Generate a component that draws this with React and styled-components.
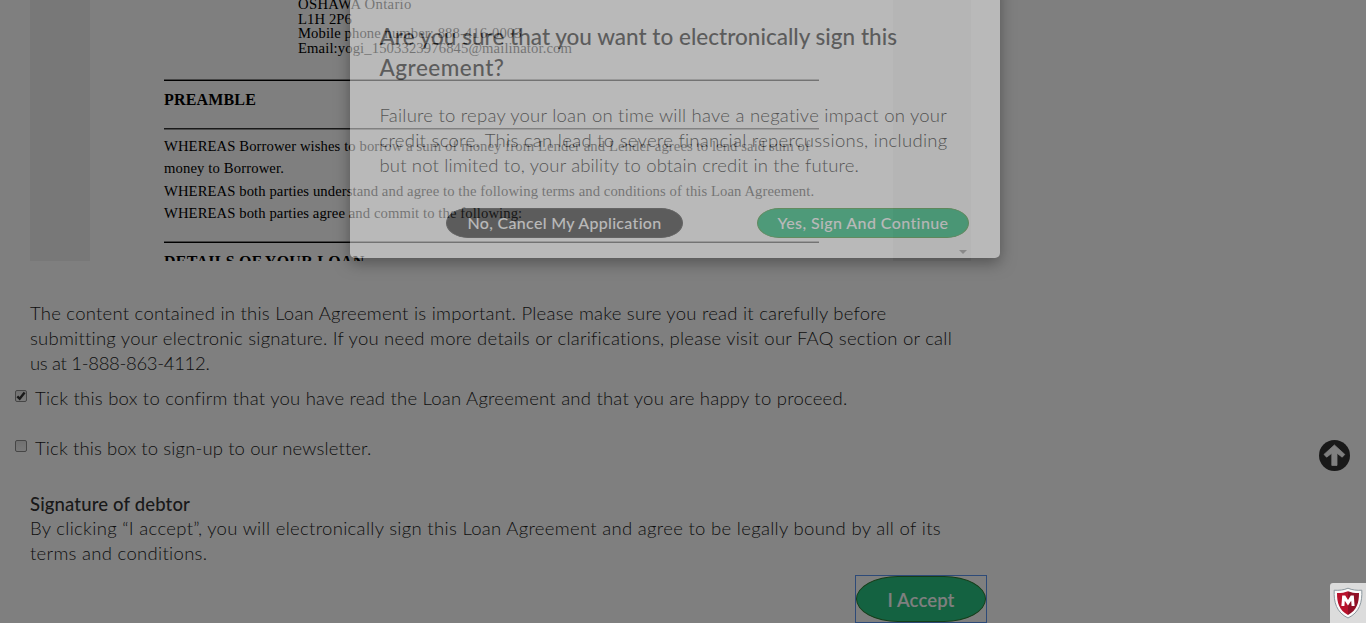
import React from "react";
import styled, { createGlobalStyle } from "styled-components";

const GlobalStyle = createGlobalStyle`
  *, *::before, *::after { box-sizing: border-box; }
  body { margin: 0; background: #fff; color: #333; font-family: Lato, "Open Sans", sans-serif; }
`;

const Page = styled.div`
  position: relative;
  width: 1366px;
  height: 623px;
  overflow: hidden;
  background: #fff;
`;

const Line = styled.span`
  display: block;
  white-space: nowrap;
  letter-spacing: ${(p) => p.$track || 0}px;
`;

/* Loan document */

const DocumentFrame = styled.section`
  display: flex;
  width: 941px;
  height: 261px;
  margin-left: 30px;
  overflow: hidden;
`;

const Gutter = styled.div`
  flex: none;
  width: ${(p) => p.$width}px;
  background: #f1f1f1;
`;

const ScrollTrack = styled.div`
  display: flex;
  flex: none;
  align-items: flex-end;
  justify-content: center;
  width: 17px;
  padding-bottom: 7px;
  background: #f1f1f1;
`;

const ScrollArrow = styled.i`
  border: 4px solid transparent;
  border-top-color: #505050;
  border-bottom: 0;
`;

const Paper = styled.article`
  flex: none;
  width: 655px;
  margin: 0 74px;
  color: #000;
  font-family: "Liberation Serif", "Times New Roman", serif;
  font-size: 14.67px;
`;

const Address = styled.address`
  height: 82px;
  margin-top: -3px;
  padding-left: 134px;
  font-style: normal;
  line-height: 14.67px;
`;

const Rule = styled.hr`
  height: 2px;
  margin: 0;
  border: 0;
  border-top: 1px solid ${(p) => p.$top};
  border-bottom: 1px solid ${(p) => p.$bottom};
`;

const DocHeading = styled.h4`
  height: 47px;
  margin: 0;
  padding-top: 9px;
  font-size: 16px;
  line-height: 20px;
`;

const Clauses = styled.div`
  height: 111px;
  padding-top: 5px;
  line-height: 22.4px;
`;

/* Consent form */

const Copy = styled.div`
  margin: ${(p) => p.$top}px 0 0 30px;
  color: #1c1c1c;
  font-size: 18.5px;
  font-weight: 300;
  line-height: 25px;
`;

const Strong = styled.strong`
  display: block;
  height: 25px;
  padding-top: 1px;
  color: #333;
  font-weight: 500;
`;

const CheckRow = styled.label`
  display: flex;
  gap: 8px;
  height: 25px;
  margin: ${(p) => p.$top}px 0 0 15px;
  color: #1c1c1c;
  font-size: 18.5px;
  font-weight: 300;
  line-height: 25px;
`;

const Box = styled.span`
  flex: none;
  width: 12px;
  height: 12px;
  margin-top: 4px;
  border: 1px solid #8c8c8c;
  border-radius: 2px;
  background: linear-gradient(#e2e2e2, #f4f4f4);

  svg { display: block; }
`;

const Actions = styled.div`
  display: flex;
  width: 987px;
  margin-top: 9px;
  justify-content: flex-end;
`;

const FocusRing = styled.div`
  width: 132px;
  height: 48px;
  border: 1px solid #5a94f0;
`;

const AcceptButton = styled.button`
  width: 130px;
  height: 46px;
  padding: 1px 0 0;
  border: 1px solid #2c7a32;
  border-radius: 42px / 23px;
  background: #28c582;
  color: #fff;
  font: 600 18.5px/24px Lato, sans-serif;
`;

/* Floating elements */

const ToTop = styled.button`
  position: absolute;
  top: 440px;
  left: 1319px;
  padding: 0;
  border: 0;
  background: none;

  svg { display: block; }
`;

const Backdrop = styled.div`
  position: absolute;
  inset: 0;
  background: rgba(0, 0, 0, 0.5);
`;

const Modal = styled.div`
  position: absolute;
  top: -20px;
  left: 350px;
  width: 650px;
  height: 278px;
  padding: 41px 29px 0;
  border-radius: 5px;
  background: #fff;
  box-shadow: 0 5px 15px rgba(0, 0, 0, 0.75);
  opacity: 0.45;
`;

const ModalTitle = styled.h3`
  margin: 0;
  padding-left: 0.5px;
  font-size: 22.5px;
  font-weight: 500;
  line-height: 31px;
`;

const ModalText = styled.div`
  margin-top: 20px;
  padding-left: 0.5px;
  color: #1c1c1c;
  font-size: 18.5px;
  font-weight: 300;
  line-height: 25px;
`;

const ModalActions = styled.div`
  display: flex;
  justify-content: flex-end;
  gap: 74px;
  margin: 30px 2px 0 0;
`;

const PillButton = styled.button`
  width: ${(p) => p.$width}px;
  height: 30px;
  padding: 0;
  border: 1px solid ${(p) => p.$edge};
  border-radius: 22px / 15px;
  background: ${(p) => p.$fill};
  color: #fff;
  font: 500 16px/28px Lato, sans-serif;
`;

const ShieldBadge = styled.div`
  position: absolute;
  right: 0;
  bottom: 0;
  display: flex;
  align-items: center;
  justify-content: center;
  width: 36px;
  height: 40px;
  border-radius: 3px 0 0 0;
  background: #dcdcdc;
`;

const CheckMark = () => (
  <svg width="10" height="10" viewBox="0 0 10 10" fill="none" stroke="#333" strokeWidth="2.4">
    <path d="M1.3 5.4 3.7 7.8 8.6 1.5" />
  </svg>
);

const ArrowUpIcon = () => (
  <svg width="31" height="31" viewBox="0 0 31 31">
    <circle cx="15.5" cy="15.5" r="15.5" fill="#333" />
    <path
      d="M15.4 5 25.8 14.4 23.2 17.2 18 13.2V25.4H12.8V13.2L7.6 17.2 5 14.4Z"
      fill="#fff"
      stroke="#fff"
      strokeWidth="0.8"
      strokeLinejoin="round"
    />
  </svg>
);

const ShieldIcon = () => (
  <svg width="30" height="32" viewBox="0 0 30 32">
    <path d="M15 1.2C11 3 6 3.6 1.2 3.2 0.6 15 3.4 25.4 15 31 26.6 25.4 29.4 15 28.8 3.2 24 3.6 19 3 15 1.2Z" fill="#fafafa" stroke="#8b979e" strokeWidth="1" />
    <path d="M15 4.3C11.5 5.7 7.8 6.2 4 6.1 3.9 15.5 6.2 23.6 15 28Z" fill="#b8122c" />
    <path d="M15 4.3C18.5 5.7 22.2 6.2 26 6.1 26.1 15.5 23.8 23.6 15 28Z" fill="#901026" />
    <path d="M8.400 19 9.200 8.400H12.200L15 13 17.800 8.400H20.800L21.600 19H18.600L18.200 13.800 15 18.600 11.800 13.800 11.400 19Z" fill="#fff" />
  </svg>
);

export default function App() {
  return (
    <Page>
      <GlobalStyle />

      <DocumentFrame>
        <Gutter $width={60} />
        <Paper>
          <Address>
            <Line $track={0.32}>OSHAWA Ontario</Line>
            <Line $track={0.1}>L1H 2P6</Line>
            <Line $track={0.08}>Mobile phone number: 888-416-0003</Line>
            <Line $track={0.114}>Email:yogi_1503323976845@mailinator.com</Line>
          </Address>
          <Rule $top="#8a8a8a" $bottom="#000" />
          <DocHeading><Line $track={0.17}>PREAMBLE</Line></DocHeading>
          <Rule $top="#333" $bottom="#999" />
          <Clauses>
            <Line $track={0.095}>WHEREAS Borrower wishes to borrow a sum of money from Lender and Lender agrees to lend said sum of</Line>
            <Line $track={0.13}>money to Borrower.</Line>
            <Line $track={0.092}>WHEREAS both parties understand and agree to the following terms and conditions of this Loan Agreement.</Line>
            <Line $track={0.09}>WHEREAS both parties agree and commit to the following:</Line>
          </Clauses>
          <Rule $top="#8a8a8a" $bottom="#000" />
          <DocHeading><Line $track={0.25}>DETAILS OF YOUR LOAN</Line></DocHeading>
        </Paper>
        <Gutter $width={61} />
        <ScrollTrack><ScrollArrow /></ScrollTrack>
      </DocumentFrame>

      <Copy $top={40}>
        <Line $track={0.242}>The content contained in this Loan Agreement is important. Please make sure you read it carefully before</Line>
        <Line $track={0.239}>submitting your electronic signature. If you need more details or clarifications, please visit our FAQ section or call</Line>
        <Line $track={-0.32}>us at 1-888-863-4112.</Line>
      </Copy>
      <CheckRow $top={10}>
        <Box><CheckMark /></Box>
        <Line $track={0.227}>Tick this box to confirm that you have read the Loan Agreement and that you are happy to proceed.</Line>
      </CheckRow>
      <CheckRow $top={25}>
        <Box />
        <Line $track={0.119}>Tick this box to sign-up to our newsletter.</Line>
      </CheckRow>
      <Copy $top={30}>
        <Strong><Line $track={0.15}>Signature of debtor</Line></Strong>
        <Line $track={0.312}>By clicking “I accept”, you will electronically sign this Loan Agreement and agree to be legally bound by all of its</Line>
        <Line $track={0.3}>terms and conditions.</Line>
      </Copy>
      <Actions>
        <FocusRing>
          <AcceptButton><Line $track={0.1}>I Accept</Line></AcceptButton>
        </FocusRing>
      </Actions>

      <ToTop aria-label="Back to top"><ArrowUpIcon /></ToTop>
      <Backdrop />

      <Modal role="dialog">
        <ModalTitle>
          <Line $track={0.015}>Are you sure that you want to electronically sign this</Line>
          <Line $track={0.5}>Agreement?</Line>
        </ModalTitle>
        <ModalText>
          <Line $track={0.235}>Failure to repay your loan on time will have a negative impact on your</Line>
          <Line $track={0.282}>credit score. This can lead to severe financial repercussions, including</Line>
          <Line $track={0.155}>but not limited to, your ability to obtain credit in the future.</Line>
        </ModalText>
        <ModalActions>
          <PillButton $width={237} $fill="#333" $edge="#444"><Line $track={0.31}>No, Cancel My Application</Line></PillButton>
          <PillButton $width={212} $fill="#14bb73" $edge="#3f9a3c"><Line $track={0.4}>Yes, Sign And Continue</Line></PillButton>
        </ModalActions>
      </Modal>

      <ShieldBadge><ShieldIcon /></ShieldBadge>
    </Page>
  );
}
